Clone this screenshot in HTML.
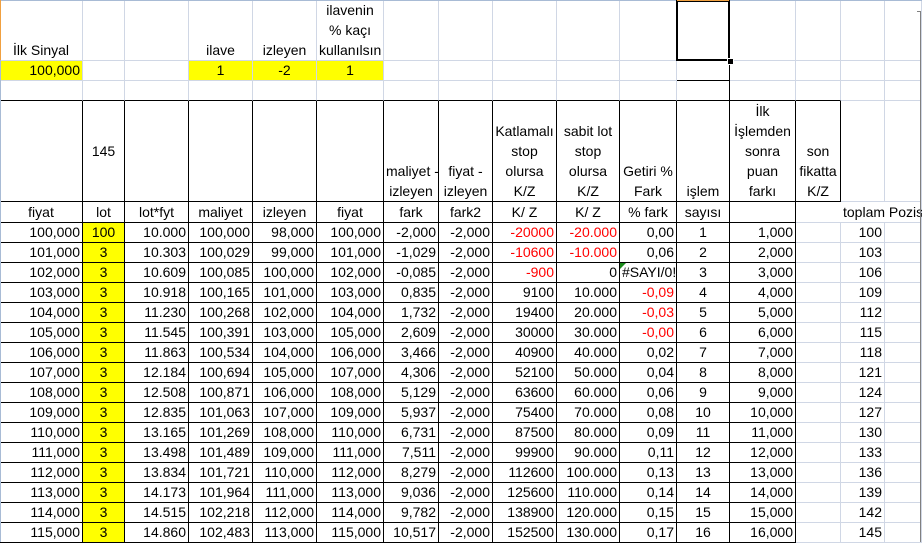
<!DOCTYPE html>
<html><head><meta charset="utf-8"><style>
body{margin:0;width:922px;height:542px;overflow:hidden;background:#fff;position:relative;font-family:"Liberation Sans",sans-serif;font-size:14px;color:#000}
table{position:absolute;left:0;top:0;border-collapse:separate;border-spacing:0;table-layout:fixed;width:922px}
td{box-sizing:border-box;border-right:1px solid #000;border-bottom:1px solid #000;padding:0 2px;text-align:right;white-space:nowrap;overflow:visible;line-height:19px;height:20px;vertical-align:bottom}
td.g{border-right-color:#d0d7e5;border-bottom-color:#d0d7e5}
td.c{text-align:center}
td.l{text-align:left}
.y{background:#ff0}
.r{color:#f00}
tr.h td{vertical-align:bottom;text-align:center;line-height:20px}
</style></head><body>
<table>
<colgroup><col style="width:83px"><col style="width:42px"><col style="width:64px"><col style="width:64px"><col style="width:64px"><col style="width:67px"><col style="width:55px"><col style="width:54px"><col style="width:64px"><col style="width:63px"><col style="width:57px"><col style="width:53px"><col style="width:66px"><col style="width:45px"><col style="width:44px"><col style="width:37px"></colgroup>
<tr class="h"><td class="g l" style="height:60px">İlk Sinyal</td><td class="g"></td><td class="g"></td><td class="g">ilave</td><td class="g">izleyen</td><td class="g">ilavenin<br>% kaçı<br>kullanılsın</td><td class="g"></td><td class="g"></td><td class="g"></td><td class="g"></td><td class="g"></td><td></td><td class="g"></td><td class="g"></td><td class="g"></td><td class="g"></td></tr>
<tr><td class="g y">100,000</td><td class="g"></td><td class="g"></td><td class="g y c">1</td><td class="g y c">-2</td><td class="g y c">1</td><td class="g"></td><td class="g"></td><td class="g"></td><td class="g"></td><td class="g"></td><td></td><td class="g"></td><td class="g"></td><td class="g"></td><td class="g"></td></tr>
<tr><td class="g" style="border-bottom-color:#000"></td><td class="g" style="border-bottom-color:#000"></td><td class="g" style="border-bottom-color:#000"></td><td class="g" style="border-bottom-color:#000"></td><td class="g" style="border-bottom-color:#000"></td><td class="g" style="border-bottom-color:#000"></td><td class="g" style="border-bottom-color:#000"></td><td class="g" style="border-bottom-color:#000"></td><td class="g" style="border-bottom-color:#000"></td><td class="g" style="border-bottom-color:#000"></td><td class="g" style="border-bottom-color:#000"></td><td></td><td class="g" style="border-bottom-color:#000"></td><td class="g" style="border-bottom-color:#000"></td><td class="g"></td><td class="g"></td></tr>
<tr class="h"><td style="height:100px"></td><td style="vertical-align:middle">145</td><td></td><td></td><td></td><td></td><td>maliyet -<br>izleyen</td><td>fiyat -<br>izleyen</td><td>Katlamalı<br>stop<br>olursa<br>K/Z</td><td>sabit lot<br>stop<br>olursa<br>K/Z</td><td>Getiri %<br>Fark</td><td>işlem</td><td>İlk<br>İşlemden<br>sonra<br>puan<br>farkı</td><td>son<br>fikatta<br>K/Z</td><td class="g"></td><td class="g"></td></tr>
<tr class="h"><td>fiyat</td><td>lot</td><td>lot*fyt</td><td>maliyet</td><td>izleyen</td><td>fiyat</td><td>fark</td><td>fark2</td><td>K/ Z</td><td>K/ Z</td><td>% fark</td><td>sayısı</td><td></td><td class="g" style="border-right:none"></td><td class="g l" style="border-right:none">toplam Pozis</td><td class="g"></td></tr>
<tr><td>100,000</td><td class="y c">100</td><td>10.000</td><td>100,000</td><td>98,000</td><td>100,000</td><td>-2,000</td><td>-2,000</td><td class="r">-20000</td><td class="r">-20.000</td><td>0,00</td><td class="c">1</td><td>1,000</td><td class="g"></td><td class="g">100</td><td class="g"></td></tr>
<tr><td>101,000</td><td class="y c">3</td><td>10.303</td><td>100,029</td><td>99,000</td><td>101,000</td><td>-1,029</td><td>-2,000</td><td class="r">-10600</td><td class="r">-10.000</td><td>0,06</td><td class="c">2</td><td>2,000</td><td class="g"></td><td class="g">103</td><td class="g"></td></tr>
<tr><td>102,000</td><td class="y c">3</td><td>10.609</td><td>100,085</td><td>100,000</td><td>102,000</td><td>-0,085</td><td>-2,000</td><td class="r">-900</td><td>0</td><td class="l" style="position:relative"><span style="position:absolute;left:0;top:0;width:0;height:0;border-top:6px solid #1a8a1a;border-right:6px solid transparent"></span>#SAYI/0!</td><td class="c">3</td><td>3,000</td><td class="g"></td><td class="g">106</td><td class="g"></td></tr>
<tr><td>103,000</td><td class="y c">3</td><td>10.918</td><td>100,165</td><td>101,000</td><td>103,000</td><td>0,835</td><td>-2,000</td><td>9100</td><td>10.000</td><td class="r">-0,09</td><td class="c">4</td><td>4,000</td><td class="g"></td><td class="g">109</td><td class="g"></td></tr>
<tr><td>104,000</td><td class="y c">3</td><td>11.230</td><td>100,268</td><td>102,000</td><td>104,000</td><td>1,732</td><td>-2,000</td><td>19400</td><td>20.000</td><td class="r">-0,03</td><td class="c">5</td><td>5,000</td><td class="g"></td><td class="g">112</td><td class="g"></td></tr>
<tr><td>105,000</td><td class="y c">3</td><td>11.545</td><td>100,391</td><td>103,000</td><td>105,000</td><td>2,609</td><td>-2,000</td><td>30000</td><td>30.000</td><td class="r">-0,00</td><td class="c">6</td><td>6,000</td><td class="g"></td><td class="g">115</td><td class="g"></td></tr>
<tr><td>106,000</td><td class="y c">3</td><td>11.863</td><td>100,534</td><td>104,000</td><td>106,000</td><td>3,466</td><td>-2,000</td><td>40900</td><td>40.000</td><td>0,02</td><td class="c">7</td><td>7,000</td><td class="g"></td><td class="g">118</td><td class="g"></td></tr>
<tr><td>107,000</td><td class="y c">3</td><td>12.184</td><td>100,694</td><td>105,000</td><td>107,000</td><td>4,306</td><td>-2,000</td><td>52100</td><td>50.000</td><td>0,04</td><td class="c">8</td><td>8,000</td><td class="g"></td><td class="g">121</td><td class="g"></td></tr>
<tr><td>108,000</td><td class="y c">3</td><td>12.508</td><td>100,871</td><td>106,000</td><td>108,000</td><td>5,129</td><td>-2,000</td><td>63600</td><td>60.000</td><td>0,06</td><td class="c">9</td><td>9,000</td><td class="g"></td><td class="g">124</td><td class="g"></td></tr>
<tr><td>109,000</td><td class="y c">3</td><td>12.835</td><td>101,063</td><td>107,000</td><td>109,000</td><td>5,937</td><td>-2,000</td><td>75400</td><td>70.000</td><td>0,08</td><td class="c">10</td><td>10,000</td><td class="g"></td><td class="g">127</td><td class="g"></td></tr>
<tr><td>110,000</td><td class="y c">3</td><td>13.165</td><td>101,269</td><td>108,000</td><td>110,000</td><td>6,731</td><td>-2,000</td><td>87500</td><td>80.000</td><td>0,09</td><td class="c">11</td><td>11,000</td><td class="g"></td><td class="g">130</td><td class="g"></td></tr>
<tr><td>111,000</td><td class="y c">3</td><td>13.498</td><td>101,489</td><td>109,000</td><td>111,000</td><td>7,511</td><td>-2,000</td><td>99900</td><td>90.000</td><td>0,11</td><td class="c">12</td><td>12,000</td><td class="g"></td><td class="g">133</td><td class="g"></td></tr>
<tr><td>112,000</td><td class="y c">3</td><td>13.834</td><td>101,721</td><td>110,000</td><td>112,000</td><td>8,279</td><td>-2,000</td><td>112600</td><td>100.000</td><td>0,13</td><td class="c">13</td><td>13,000</td><td class="g"></td><td class="g">136</td><td class="g"></td></tr>
<tr><td>113,000</td><td class="y c">3</td><td>14.173</td><td>101,964</td><td>111,000</td><td>113,000</td><td>9,036</td><td>-2,000</td><td>125600</td><td>110.000</td><td>0,14</td><td class="c">14</td><td>14,000</td><td class="g"></td><td class="g">139</td><td class="g"></td></tr>
<tr><td>114,000</td><td class="y c">3</td><td>14.515</td><td>102,218</td><td>112,000</td><td>114,000</td><td>9,782</td><td>-2,000</td><td>138900</td><td>120.000</td><td>0,15</td><td class="c">15</td><td>15,000</td><td class="g"></td><td class="g">142</td><td class="g"></td></tr>
<tr><td>115,000</td><td class="y c">3</td><td>14.860</td><td>102,483</td><td>113,000</td><td>115,000</td><td>10,517</td><td>-2,000</td><td>152500</td><td>130.000</td><td>0,17</td><td class="c">16</td><td>16,000</td><td class="g"></td><td class="g">145</td><td class="g"></td></tr>
</table>
<div style="position:absolute;left:0;top:0;width:922px;height:1px;background:#a8bbd5"></div>
<div style="position:absolute;left:0;top:0;width:1px;height:542px;background:#a8bbd5"></div>
<div style="position:absolute;left:0;top:0;width:1px;height:60px;background:#f0a040"></div>
<div style="position:absolute;left:676px;top:0;width:54px;height:61px;box-sizing:border-box;border:2px solid #000"></div>
<div style="position:absolute;left:677px;top:0;width:52px;height:1px;background:#f0a040"></div>
<div style="position:absolute;left:727px;top:58px;width:5px;height:5px;background:#000;border:1px solid #fff"></div>
<div style="position:absolute;left:920px;top:11px;width:1px;height:531px;background:#808080"></div>
<div style="position:absolute;left:917px;top:11px;width:4px;height:1px;background:#808080"></div>
</body></html>
